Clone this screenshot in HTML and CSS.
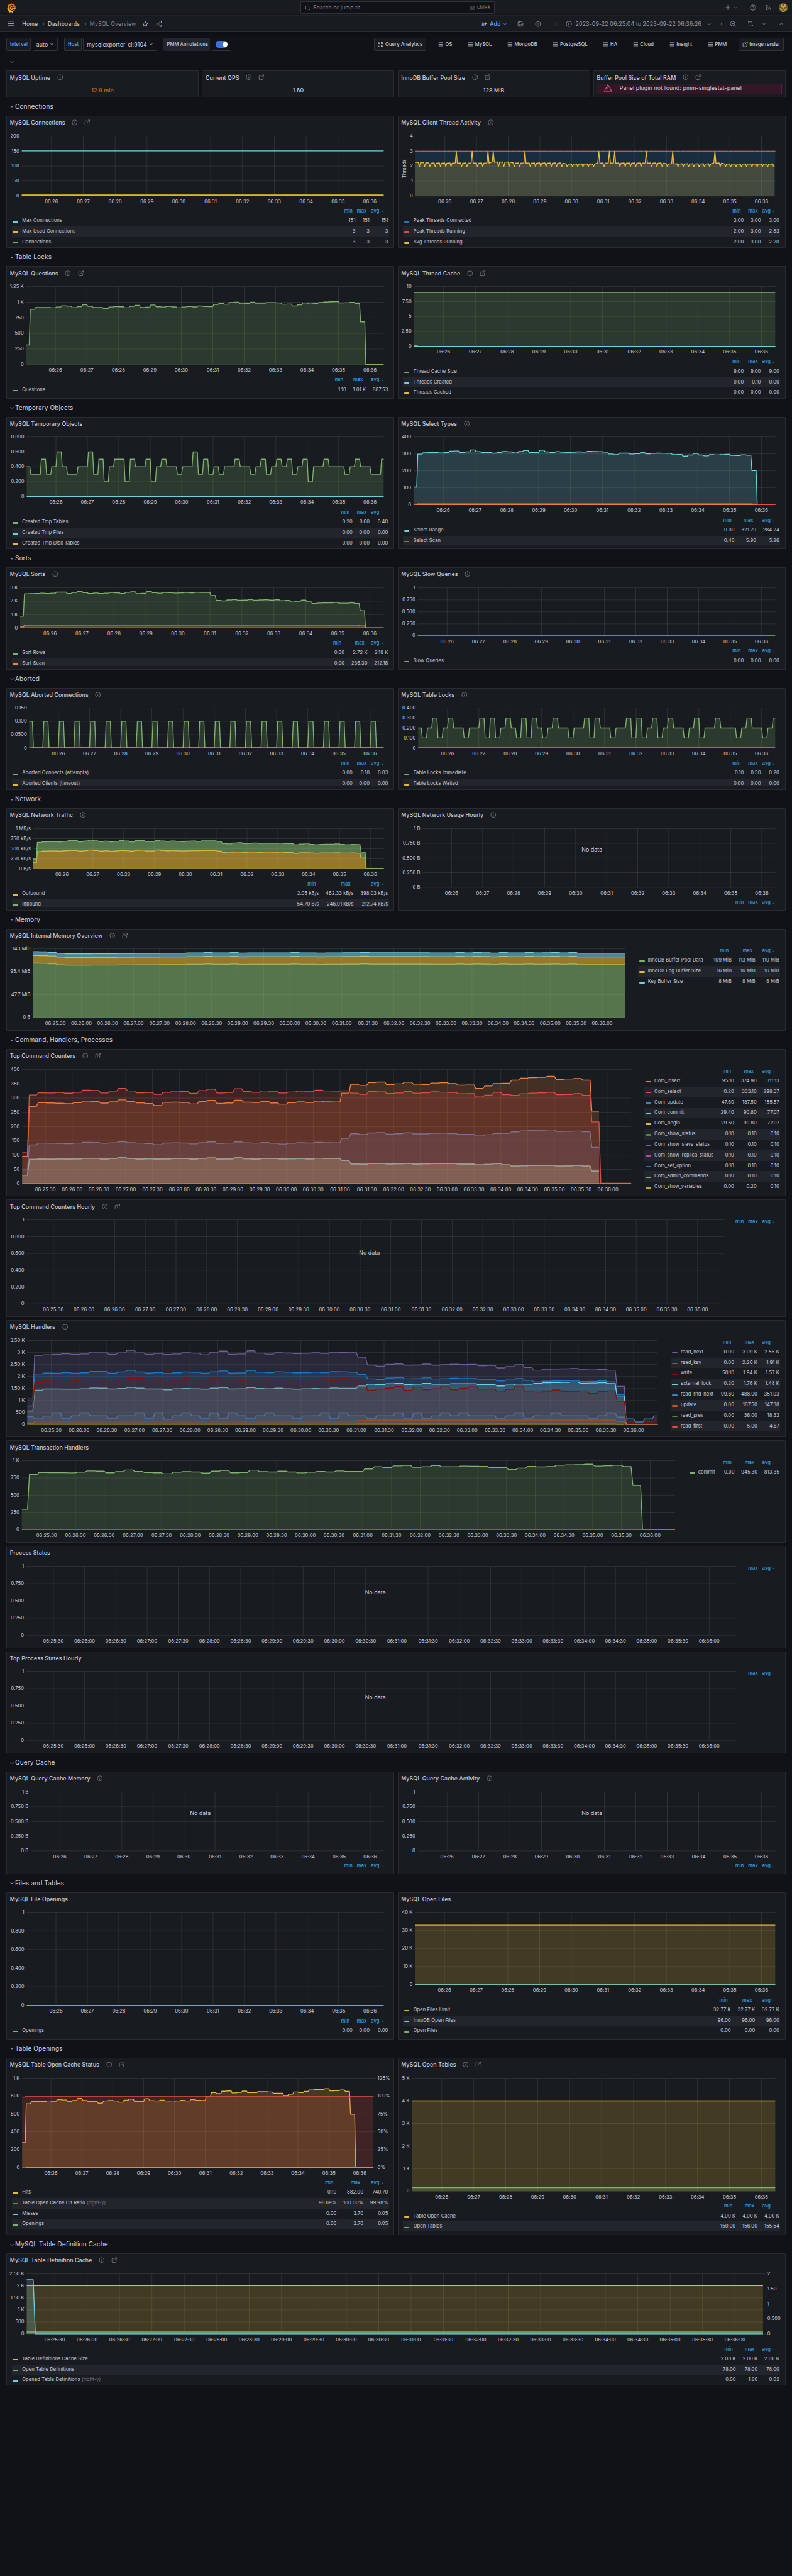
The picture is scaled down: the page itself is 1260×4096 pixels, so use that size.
FILE: index.html
```html
<!DOCTYPE html>
<html lang="en">
<head>
<meta charset="utf-8">
<title>MySQL Overview - Dashboards - Grafana</title>
<link rel="stylesheet" href="styles.css">
</head>
<body>
<svg class="sprite" aria-hidden="true">
  <defs>
    <linearGradient id="flame" x1="0" y1="1" x2="0" y2="0"><stop offset="0" stop-color="#fcd51f"/><stop offset=".4" stop-color="#faa51a"/><stop offset="1" stop-color="#f05a28"/></linearGradient>
  </defs>
  <symbol id="i-down" viewBox="0 0 24 24"><path d="M6.5 9.5l5.5 5.5 5.5-5.5"/></symbol>
  <symbol id="i-up" viewBox="0 0 24 24"><path d="M5 15.5l7-7 7 7"/></symbol>
  <symbol id="i-right" viewBox="0 0 24 24"><path d="M9.5 6.5l5.5 5.5-5.5 5.5"/></symbol>
  <symbol id="i-left" viewBox="0 0 24 24"><path d="M14.5 6.5L9 12l5.5 5.5"/></symbol>
  <symbol id="i-info" viewBox="0 0 24 24"><circle cx="12" cy="12" r="10"/><path d="M12 11v6M12 7v1.6"/></symbol>
  <symbol id="i-link" viewBox="0 0 24 24"><path d="M13 5.5H5.5A2.5 2.5 0 0 0 3 8v11.5A2.5 2.5 0 0 0 5.5 22H17a2.5 2.5 0 0 0 2.5-2.5V11M15.5 2.5H22V9M21.5 3L10 14.5"/></symbol>
  <symbol id="i-bars" viewBox="0 0 24 24"><path d="M2 5h20M2 12h20M2 19h20"/></symbol>
  <symbol id="i-star" viewBox="0 0 24 24"><path d="M12 2.5l2.9 6 6.6.9-4.8 4.6 1.2 6.6L12 17.5l-5.9 3.1 1.2-6.6L2.5 9.4l6.600-.9z"/></symbol>
  <symbol id="i-share" viewBox="0 0 24 24"><circle cx="18" cy="5" r="3.2"/><circle cx="6" cy="12" r="3.2"/><circle cx="18" cy="19" r="3.2"/><path d="M8.8 10.4l6.4-3.8M8.8 13.6l6.4 3.8"/></symbol>
  <symbol id="i-search" viewBox="0 0 24 24"><circle cx="11" cy="11" r="8"/><path d="M17 17l5 5"/></symbol>
  <symbol id="i-keys" viewBox="0 0 24 24"><rect x="2" y="5" width="20" height="14" rx="2"/><path d="M5 9h2M9 9h2M13 9h2M17 9h2M5 12.5h2M9 12.5h2M13 12.5h2M17 12.5h2M7 16h10"/></symbol>
  <symbol id="i-plus" viewBox="0 0 24 24"><path d="M12 3v18M3 12h18"/></symbol>
  <symbol id="i-help" viewBox="0 0 24 24"><circle cx="12" cy="12" r="9.8"/><path d="M9.3 9.5a2.7 2.7 0 1 1 3.9 2.3c-.8.4-1.2.9-1.2 1.9M12 16v1.5"/></symbol>
  <symbol id="i-rss" viewBox="0 0 24 24"><path d="M4 3.500A16.500 16.500 0 0 1 20.500 20M4 9a11 11 0 0 1 11 11M4 14a6 6 0 0 1 6 6"/><circle cx="5" cy="19" r="1.800"/></symbol>
  <symbol id="i-save" viewBox="0 0 24 24"><path d="M3 6a3 3 0 0 1 3-3h9.500L21 8.500V18a3 3 0 0 1-3 3H6a3 3 0 0 1-3-3zM8 3v5h6M7.500 21v-7h9v7"/></symbol>
  <symbol id="i-gear" viewBox="0 0 24 24"><circle cx="12" cy="12" r="3.500"/><path d="M10 2.500h4l.6 2.800 2.400-1.500 2.900 2.900-1.500 2.300 3.100.8v4.400l-3.100.8 1.500 2.300-2.900 2.900-2.400-1.500-.6 2.800h-4l-.6-2.800L7 20.200l-2.900-2.900L5.600 15l-3.100-.8V9.800L5.600 9 4.100 6.700 7 3.800l2.400 1.500z"/></symbol>
  <symbol id="i-clock" viewBox="0 0 24 24"><circle cx="12" cy="12" r="9.800"/><path d="M12 6v6.500H8"/></symbol>
  <symbol id="i-zoomout" viewBox="0 0 24 24"><circle cx="11" cy="11" r="8.500"/><path d="M7.500 11h7M17.500 17.500L22 22"/></symbol>
  <symbol id="i-sync" viewBox="0 0 24 24"><path d="M20.500 9.500A9 9 0 0 0 4.500 7.500M4 2.500v5.500h5.500M3.500 14.500a9 9 0 0 0 16 2M20 21.500V16h-5.500"/></symbol>
  <symbol id="i-apps" viewBox="0 0 24 24"><rect x="2.500" y="2.500" width="7" height="7"/><rect x="14.500" y="2.500" width="7" height="7"/><rect x="2.500" y="14.500" width="7" height="7"/><rect x="14.500" y="14.500" width="7" height="7"/></symbol>
  <symbol id="i-warn" viewBox="0 0 24 24"><path d="M12 3L22 20.500H2zM12 9.500v5M12 16.500v1.500"/></symbol>
  <symbol id="i-add" viewBox="0 0 24 24"><path d="M2.500 21V11M7.500 21V6M12.500 21V10M17 21v-5" stroke-width="3"/><path d="M18.500 6v9M14 10.500h9" stroke="#ff9830" stroke-width="2.600"/></symbol>
</svg>

<header class="topbar">
  <svg class="logo" viewBox="0 0 24 26"><path fill="url(#flame)" d="M12.500 0l2.800 2.800 5-.6.500 4.300 2.600 3-1 2.500L23.500 15l-2.800 2.700-.2 4.500-3.800.2L15 25.800l-3.400-1.500L6 25.500l-.8-4L2.500 19l-.5-3L0 14l2.500-3L2.800 4.500l4.400-.3L9 2l2 .5z"/><path d="M20.500 11.500C19 6.500 13 4.800 9.500 7.300 6 9.800 5.500 15 8.500 18c3 3 9 2.500 10.500-2 .8-3-1.500-5.800-4.500-5.500-3.500.3-4.300 4.700-1.300 5.700 1.700.4 2.800-1 2.300-2.200" fill="none" stroke="#181b1f" stroke-width="1.800"/></svg>
  <div class="search"><svg class="ic"><use href="#i-search"/></svg><span>Search or jump to...</span><span class="kbd"><svg class="ic"><use href="#i-keys"/></svg>ctrl+k</span></div>
  <div class="top-actions">
    <svg class="ic"><use href="#i-plus"/></svg><svg class="ic chev"><use href="#i-down"/></svg><i class="rule"></i>
    <svg class="ic help"><use href="#i-help"/></svg><svg class="ic rss"><use href="#i-rss"/></svg>
    <svg class="avatar" viewBox="0 0 24 24"><circle cx="12" cy="12" r="12" fill="#4c6a0c"/><path fill="#f08a78" d="M6 3h3v4h6V3h3v7h-3v2H9v-2H6zM3 12h3v4h3v3H6v-2H3zM18 12h3v5h-3v2h-3v-3h3zM10.500 14h3v3h-3zM9 20h6v3H9z"/></svg>
  </div>
</header>

<nav class="navbar">
  <svg class="ic menu"><use href="#i-bars"/></svg>
  <div class="crumbs"><span>Home</span><svg class="ic"><use href="#i-right"/></svg><span>Dashboards</span><svg class="ic"><use href="#i-right"/></svg><span class="current">MySQL Overview</span></div>
  <svg class="ic star"><use href="#i-star"/></svg><svg class="ic share"><use href="#i-share"/></svg>
  <div class="tools">
    <span class="add"><svg class="ic"><use href="#i-add"/></svg>Add<svg class="ic chev"><use href="#i-down"/></svg></span>
    <svg class="ic save"><use href="#i-save"/></svg><svg class="ic gear"><use href="#i-gear"/></svg>
    <svg class="ic prev"><use href="#i-left"/></svg>
    <span class="range"><svg class="ic"><use href="#i-clock"/></svg>2023-09-22 06:25:04 to 2023-09-22 06:36:26<svg class="ic chev"><use href="#i-down"/></svg></span>
    <svg class="ic next"><use href="#i-right"/></svg><svg class="ic zoomout"><use href="#i-zoomout"/></svg>
    <svg class="ic sync"><use href="#i-sync"/></svg><svg class="ic more"><use href="#i-down"/></svg><i class="rule"></i><svg class="ic fold"><use href="#i-up"/></svg>
  </div>
</nav>

<div class="submenu">
  <span class="box key">Interval</span><span class="box val">auto<svg class="ic"><use href="#i-down"/></svg></span>
  <span class="box key host">Host</span><span class="box val wide">mysqlexporter-cl:9104<svg class="ic"><use href="#i-down"/></svg></span>
  <span class="box tag">PMM Annotations</span><span class="box switch"><i></i></span>
  <div class="links">
    <span class="link boxed"><svg class="ic"><use href="#i-apps"/></svg>Query Analytics</span>
    <span class="link"><svg class="ic"><use href="#i-bars"/></svg>OS</span>
    <span class="link"><svg class="ic"><use href="#i-bars"/></svg>MySQL</span>
    <span class="link"><svg class="ic"><use href="#i-bars"/></svg>MongoDB</span>
    <span class="link"><svg class="ic"><use href="#i-bars"/></svg>PostgreSQL</span>
    <span class="link"><svg class="ic"><use href="#i-bars"/></svg>HA</span>
    <span class="link"><svg class="ic"><use href="#i-bars"/></svg>Cloud</span>
    <span class="link"><svg class="ic"><use href="#i-bars"/></svg>Insight</span>
    <span class="link"><svg class="ic"><use href="#i-bars"/></svg>PMM</span>
    <span class="link boxed last"><svg class="ic"><use href="#i-link"/></svg>Image render</span>
  </div>
</div>

<main class="dashboard" id="dashboard"></main>
<script src="dashboard.js"></script>
</body>
</html>
```
FILE: styles.css
```css
/* 1rem equals ten layout units */
html { font-size: 6.3px; background: #111217; }
* { box-sizing: border-box; }
body {
  margin: 0;
  height: 4096px;
  overflow: hidden;
  background: #111217;
  color: #ccccdc;
  font: 400 1.4rem/1.5 Inter, "Liberation Sans", sans-serif;
  letter-spacing: .01071em;
}
.sprite { position: absolute; width: 0; height: 0; }
.ic { width: 1.6rem; height: 1.6rem; flex: none; fill: none; stroke: currentColor; stroke-width: 2; overflow: visible; }
.rule { width: 1px; height: 2.4rem; background: #34363c; }

.topbar, .navbar { display: flex; align-items: center; background: #181b1f; padding: 0 1.1rem 0 1.7rem; }
.topbar { height: 4rem; border-bottom: 1px solid #2a2c32; }
.logo { width: 2.3rem; height: 2.4rem; }
.search {
  display: flex; align-items: center; gap: .7rem;
  width: 49rem; height: 3.2rem; margin-left: 71.9rem; padding: 0 .9rem;
  background: #111217; border: 1px solid #303238; border-radius: .2rem; color: #85868f;
}
.search .ic { width: 1.4rem; height: 1.4rem; }
.kbd { margin-left: auto; display: flex; align-items: center; gap: .5rem; font-size: 1.2rem; }
.top-actions { display: flex; align-items: center; margin-left: auto; color: #9a9aa6; }
.top-actions .chev { width: 1.4rem; margin: 0 1.4rem 0 .4rem; }
.top-actions .help { margin: 0 2.2rem 0 1.4rem; }
.top-actions .rss { margin-right: 1.8rem; }
.avatar { width: 2.3rem; height: 2.3rem; }

.navbar { height: 4.1rem; border-bottom: 1px solid #2a2c32; box-shadow: 0 .2rem .8rem #0a0b0e; }
.navbar .menu { width: 2.1rem; height: 2rem; }
.crumbs { display: flex; align-items: center; margin-left: 1.8rem; }
.crumbs .ic { width: 1.4rem; margin: 0 .5rem 0 .6rem; }
.crumbs .current { color: #85868f; }
.navbar .star { margin-left: 1.6rem; }
.navbar .share { margin-left: 1.8rem; }
.tools { display: flex; align-items: center; margin-left: auto; color: #9798a3; }
.add { display: flex; align-items: center; color: #6e9fff; font-weight: 500; }
.add .ic { width: 1.8rem; margin-right: .6rem; }
.add .chev, .range .chev { width: 1.4rem; margin: 0 0 0 .4rem; }
.tools .save { margin-left: 2.4rem; }
.tools .gear { margin-left: 2.8rem; }
.tools .prev { margin-left: 3.1rem; }
.range { display: flex; align-items: center; margin-left: 1.5rem; }
.range .ic { margin-right: .9rem; }
.range .chev { margin: 0 0 0 1.2rem; }
.tools .next { margin-left: 1.5rem; }
.tools .zoomout { margin-left: 1.5rem; }
.tools .sync { margin-left: 2.8rem; }
.tools .more { width: 1.4rem; margin: 0 1.4rem 0 1.9rem; }
.tools .fold { margin: 0 .8rem 0 1.3rem; }

.submenu { display: flex; align-items: center; height: 5.9rem; padding: 0 2rem 0 1.6rem; padding-top: .3rem; }
.box {
  display: flex; align-items: center; height: 3.2rem; padding: 0 .8rem;
  border: 1px solid #303238; border-radius: .2rem; white-space: nowrap;
}
.key { width: 6.2rem; background: #181b1f; color: #6e9fff; font-size: 1.2rem; font-weight: 500; }
.host { width: 4.4rem; margin-left: 1.6rem; }
.val { width: 6.4rem; margin-left: .4rem; background: #111217; }
.val .ic { width: 1.4rem; margin-left: .2rem; }
.wide { width: 18.7rem; }
.wide .ic { margin-left: .4rem; }
.tag { width: 11.8rem; margin-left: 1.6rem; background: #22252b; border-color: #22252b; font-size: 1.2rem; font-weight: 500; padding: 0 .7rem; }
.switch { width: 5rem; margin-left: .4rem; }
.switch i { width: 3.2rem; height: 1.6rem; border-radius: .8rem; background: radial-gradient(circle at 2.4rem 50%, #fff .6rem, #3d71d9 .65rem); }
.links { display: flex; align-items: center; margin-left: auto; font-size: 1.2rem; font-weight: 500; }
.link { display: flex; align-items: center; gap: .45rem; margin-left: 3.9rem; white-space: nowrap; }
.link .ic { width: 1.4rem; height: 1.4rem; }
.boxed { height: 3.2rem; padding: 0 .8rem; background: #181b1f; border: 1px solid #303238; border-radius: .2rem; }
.boxed + .link { margin-left: 3rem; }
.last { margin-left: 2.9rem; }

/* 24 columns, 30-unit rows, 8-unit gutters */
.dashboard {
  display: grid; grid-template-columns: repeat(24, 1fr); grid-auto-rows: 18.892px; gap: 5.048px;
  margin: 0 1.6rem;
}
.section { grid-column: 1 / -1; display: flex; align-items: center; margin: 0; padding-left: .6rem; font-size: 1.6rem; font-weight: 400; }
.section .ic { stroke-width: 2.2; }
.panel {
  display: flex; flex-direction: column; min-width: 0; min-height: 0; overflow: hidden;
  background: #181b1f; box-shadow: inset 0 0 0 1px #282b30; border-radius: .2rem; padding-bottom: .9rem;
}
.w6 { grid-column: span 6; }
.w12 { grid-column: span 12; }
.w24 { grid-column: span 24; }
.h2 { grid-row: span 2; }
.h7 { grid-row: span 7; }
.h8 { grid-row: span 8; }
.h9 { grid-row: span 9; }
.h10 { grid-row: span 10; }
.h12 { grid-row: span 12; }
.head { flex: none; height: 3.3rem; padding: .2rem .9rem 0; display: flex; align-items: center; font-weight: 500; }
.head .ic { width: 1.5rem; height: 1.5rem; margin-left: 1.7rem; color: #85868f; stroke-width: 2; }
.panel-body { flex: 1; min-height: 0; display: flex; flex-direction: column; }
.beside { flex-direction: row; align-items: flex-start; }
.chart { display: block; flex: none; }
.stat { align-self: center; margin-top: .6rem; font-weight: 500; }
.warm { color: #c66b21; }
.alert {
  display: flex; gap: 1.7rem; height: 3.4rem; margin: 0 .9rem; padding: 0 1.6rem;
  background: #331727; border: solid #5b1f3d; border-width: 0 1px;
}
.alert .ic { width: 2.3rem; height: 2.2rem; color: #ff5286; }

.grid { stroke: #c8d2be; stroke-opacity: .2; stroke-width: 1; }
.axis { fill: #ccccdc; font: 400 12px Inter, sans-serif; letter-spacing: .1px; }
.nodata { fill: #ccccdc; font: 400 14px Inter, sans-serif; text-anchor: middle; }
.line { fill: none; stroke-width: 2.2; stroke-linejoin: round; }

.legend {
  display: grid; flex: 0 1 auto; min-height: 0; overflow: hidden;
  margin: .1rem 1.4rem 0; font-size: 1.2rem; line-height: 2.675rem; white-space: nowrap; align-content: start;
}
.cols3 { grid-template-columns: 1fr auto auto auto; }
.cols2 { grid-template-columns: 1fr auto auto; }
.beside .legend { flex: 1; margin-left: 0; margin-top: 1.4rem; }
.legend-row { display: grid; grid-column: 1 / -1; grid-template-columns: subgrid; height: 2.675rem; }
.legend-row:nth-child(odd) { background: #22252b; }
.legend .legend-head { height: 2.1rem; line-height: 2rem; color: #33a2e5; font-weight: 500; background: none; }
.legend-row b { font-weight: 400; text-align: right; padding-left: 1.7rem; padding-right: 0; }
.legend-row b:last-child { padding-right: .2rem; }
.legend-head b { font-weight: 500; padding: 0 .75rem 0 .35rem; }
.legend-head b:last-child { padding-right: 1.1rem; }
.legend-head .ic { width: 1.1rem; height: 1.1rem; margin-left: .2rem; vertical-align: -.2rem; stroke-width: 3; }
.name { display: flex; align-items: center; }
.swatch { width: 1.4rem; height: .4rem; border-radius: .2rem; margin: .3rem 1rem 0 .2rem; }
.beside .swatch { margin-right: .8rem; margin-left: .3rem; }
.name em { font-style: normal; color: #77787f; margin-left: .4rem; }
```
FILE: dashboard.js
```javascript
const C = {
  green: '#7EB26D', yellow: '#EAB839', cyan: '#6ED0E0', orange: '#EF843C', red: '#E24D42', blue: '#1F78C1',
  steel: '#447EBC', violet: '#705DA0', leaf: '#508642', magenta: '#BA43A9', gold: '#CCA300', maroon: '#890F02', rust: '#C15C17'
};
const SPAN = 682;          // seconds between 06:25:04 and 06:36:26
const TOP = 51.5;          // plot top inside a panel
const icon = id => `<svg class="ic"><use href="#i-${id}"/></svg>`;

// "12 15*3" -> [12, 15, 15, 15]
const unpack = s => s.trim().split(/\s+/).flatMap(p => {
  const [v, n] = p.split('*');
  return Array(+(n || 1)).fill(+v);
});

// One value per ten-second bucket, joined by two-second ramps.
function stairs(values) {
  const pts = [];
  values.forEach((v, i) => {
    const from = i ? 7 + 10 * (i - 1) + 1 : 0;
    pts.push([from, v], [Math.max(from, Math.min(7 + 10 * i - 1, SPAN)), v]);
  });
  if (values.length === 69) pts[pts.length - 1][0] = SPAN;
  return pts;
}

function chart(c) {
  const { left, right, bottom } = c;
  const width = c.width || 980;
  const end = c.side ? bottom + 26 : bottom + 28.5;
  const x = t => +(left + t / SPAN * (right - left)).toFixed(1);
  const y = v => +(bottom + (v - c.scale[0]) / (c.scale[1] - c.scale[0]) * (TOP - bottom)).toFixed(1);
  const out = [];

  (c.series || []).forEach(s => {
    const data = s.points || stairs(unpack(s.data));
    const pts = data.map(([t, v]) => [x(t), y(v)]);
    const path = pts.map(p => p.join(' ')).join('L');
    if (s.fill) {
      const floor = s.above
        ? stairs(unpack(s.above)).map(([t, v]) => [x(t), y(v)]).reverse().map(p => p.join(' ')).join('L')
        : `${pts[pts.length - 1][0]} ${bottom}L${pts[0][0]} ${bottom}`;
      out.push(`<path d="M${path}L${floor}Z" fill="${s.color}" fill-opacity="${s.fill}"/>`);
    }
    out.push(`<path class="line" d="M${path}" stroke="${s.color}"${s.dash ? ` stroke-dasharray="${s.dash}"` : ''}/>`);
  });

  const grid = [], n = c.y.length - 1;
  c.y.forEach((label, i) => {
    const gy = +(bottom + i / n * (TOP - bottom)).toFixed(1);
    grid.push(`M${left} ${gy}H${right}`);
    out.push(`<text class="axis" x="${left - 6}" y="${gy + 3.6}" text-anchor="end">${label}</text>`);
  });
  (c.y2 || []).forEach((label, i) => {
    const gy = +(bottom + i / (c.y2.length - 1) * (TOP - bottom)).toFixed(1);
    grid.push(`M${right} ${gy}h6`);
    out.push(`<text class="axis" x="${right + 11}" y="${gy + 3.6}">${label}</text>`);
  });
  const step = width > 980 ? 30 : 60;
  for (let t = step === 30 ? 26 : 56; t < SPAN; t += step) {
    const clock = 25 * 60 + 4 + t;
    const mm = String(Math.floor(clock / 60)).padStart(2, '0');
    const ss = String(clock % 60).padStart(2, '0');
    grid.push(`M${x(t)} ${TOP}V${bottom}`);
    out.push(`<text class="axis" x="${x(t)}" y="${bottom + 18.5}" text-anchor="middle">06:${mm}${step === 30 ? ':' + ss : ''}</text>`);
  }
  if (c.unit) out.push(`<text class="axis" transform="translate(21 ${(TOP + bottom) / 2 + 6}) rotate(-90)" text-anchor="middle">${c.unit}</text>`);
  if (c.empty) out.push(`<text class="nodata" x="${c.empty[0]}" y="${c.empty[1] + 5}">No data</text>`);

  const w = c.side || width;
  return `<svg class="chart" style="width:${w / 10}rem;height:${(end - 33) / 10}rem" viewBox="0 33 ${w} ${end - 33}">` +
    `<path class="grid" fill="none" d="${grid.join('')}"/>${out.join('')}</svg>`;
}

function legend(cols, rows) {
  const head = cols.map((h, i) => `<b>${h}${i === cols.length - 1 ? icon('down') : ''}</b>`).join('');
  return `<div class="legend cols${cols.length}"><div class="legend-row legend-head"><span></span>${head}</div>` +
    rows.map(([color, name, vals, note]) =>
      `<div class="legend-row"><span class="name"><i class="swatch" style="background:${C[color]}"></i>${name}` +
      `${note ? `<em>${note}</em>` : ''}</span>${vals.split('|').map(v => `<b>${v}</b>`).join('')}</div>`).join('') + '</div>';
}

const section = title => `<h2 class="section">${icon('down')}${title}</h2>`;
const panel = (size, title, icons, body, beside) =>
  `<section class="panel ${size}"><div class="head">${title}${icons.map(icon).join('')}</div>` +
  `<div class="panel-body${beside ? ' beside' : ''}">${body}</div></section>`;
const graph = (size, title, icons, c, rows, cols = ['min', 'max', 'avg']) =>
  panel(size, title, icons, chart(c) + legend(cols, rows), c.side);

const flat = (v, color, fill) => ({ points: [[0, v], [SPAN, v]], color: C[color], fill });

// ---- series -------------------------------------------------------------
const questions = '603 368 356*3 358 353 345 347 357 350 338 348 356 356 364 353 350 351 358 348 341 356 354 339 351 353 348 352 358 353 349 352 346 349 350 336 329 334 323 321 331 329 321 328 328 324 324 326 334 333 346 338 326 332 330 323 320 318 317 326 325 322 330 451 733*4';
const tmpTables = ['4', '3353464334463524', '5525', '445245', '44344', '635343', '44544', '345345453452', '445444', '345', '44335'].join('');
const selects = '1542 1325 1316 1315 1315 1317 1313 1305 1304 1315 1310 1297 1309 1314 1313 1318 1314 1308 1310 1317 1307 1301 1315 1314 1299 1310 1314 1309 1312 1315 1312 1310 1311 1306 1308 1309 1311 1324 1328 1318 1318 1324 1322 1315 1323 1320 1318 1319 1320 1328 1327 1338 1331 1321 1331 1336 1328 1330 1328 1326 1333 1334 1329 1332 1433 1655*4';
const sortRows = '822 675 674 673 671 673 671 664 664 673 667 659 668 673 670 673 671 667 669 673 666 662 674 672 660 668 671 667 668 670 669 667 669 666 667 667 687 719 722 716 714 718 717 714 718 716 715 717 715 721 719 729 724 717 728 739 736 735 735 733 737 737 735 739 787 899*4';
const outbound = '879 807 804 803 803 804 802 800 800 804 801 797 800 804 802 805 803 800 801 804 799 798 803 803 797 800 802 801 802 803 802 801 801 800 800 800 804 814 815 811 810 813 811 811 813 811 811 812 811 813 814 819 815 811 816 818 816 816 816 815 817 817 816 818 849 919*4';
const traffic = '857 747 743 742 742 743 740 736 736 743 738 732 737 742 739 743 740 736 738 743 736 734 741 741 734 738 740 738 740 742 739 738 740 737 737 737 741 755 757 751 749 755 754 751 754 753 753 753 752 755 756 763 758 752 760 763 760 759 759 757 761 763 761 762 811 918*4';
const pool = unpack('1546 1547 1550 1557 1560*3 1559*3 1558*2 1557*3 1556*3 1554*2 1552 1554*2 1552 1555 1554*5 1552 1554*2 1555 1554*2 1553*2 1551 1553*5 1553*2 1554*3 1552 1554 1552 1553 1555 1552 1554 1554 1552 1554 1553 1552 1554 1552 1556*20').slice(0, 69);
const lift = d => pool.map(v => v - d).join(' ');
const commit = '1374 1270 1268 1269 1267 1268 1267 1263 1263 1268 1264 1257 1264 1268 1266 1268 1267 1264 1265 1268 1263 1260 1268 1267 1259 1266 1268 1264 1264 1267 1266 1265 1267 1262 1264 1264 1278 1300 1302 1298 1297 1300 1299 1297 1301 1299 1298 1298 1298 1301 1301 1306 1303 1298 1306 1314 1312 1311 1310 1310 1314 1313 1311 1314 1348';
const update = '1339 1175 1163 1164 1165 1167 1163 1158 1159 1164 1161 1154 1160 1163 1166 1173 1162 1161 1162 1168 1160 1155 1165 1163 1155 1161 1163 1159 1164 1169 1164 1160 1162 1158 1160 1161 1131 1101 1106 1096 1094 1104 1101 1095 1102 1102 1098 1097 1100 1105 1105 1115 1108 1099 1098 1089 1082 1080 1078 1076 1086 1085 1083 1088 1191';
const insert = '1250 921 896 898 900 903 896 886 888 899 891 878 890 897 902 916 894 893 895 905 888 881 901 898 880 893 895 888 898 906 896 891 895 886 891 892 833 775 782 763 760 776 772 761 774 776 767 765 770 781 780 802 787 770 768 748 735 731 729 723 743 740 737 748 952';
const select = '1221 846 831 832 829 834 828 814 816 832 820 802 819 831 829 841 828 820 823 835 817 807 832 829 804 823 828 819 824 832 826 820 824 814 819 820 818 833 841 823 820 836 832 822 833 831 824 827 829 838 837 859 847 828 843 848 838 833 831 828 843 842 837 848 1023 1427*4';
const readNext = '1282 994 990 987 984 987 985 972 972 987 978 961 978 987 982 988 985 977 980 990 973 966 987 985 964 980 986 977 979 983 981 977 982 973 976 977 1007 1058 1066 1054 1051 1060 1058 1052 1059 1056 1053 1055 1054 1063 1061 1077 1068 1056 1074 1092 1085 1084 1083 1081 1089 1090 1086 1092 1199 1450*4';
const readKey = '1328 1117 1111 1112 1108 1112 1109 1101 1101 1112 1104 1093 1104 1111 1108 1114 1109 1104 1106 1112 1103 1097 1111 1110 1094 1105 1108 1103 1105 1109 1108 1105 1108 1102 1103 1105 1120 1149 1154 1144 1142 1149 1148 1143 1150 1148 1145 1147 1147 1152 1152 1163 1157 1147 1159 1169 1165 1163 1162 1160 1167 1166 1163 1169 1253 1450*4';
const write = '1338 1174 1161 1152 1168 1160 1149 1152 1152 1170 1154 1144 1144 1171 1148 1171 1159 1144 1156 1170 1142 1158 1151 1160 1157 1156 1149 1155 1155 1167 1157 1155 1148 1162 1143 1156 1178 1224 1216 1211 1200 1225 1204 1220 1215 1202 1221 1212 1202 1217 1216 1235 1219 1202 1235 1237 1234 1222 1232 1231 1236 1246 1233 1228 1296 1433 1441 1433 1422';
const extLock = '1361 1224 1216 1216 1217 1217 1215 1210 1211 1216 1213 1206 1211 1216 1216 1221 1215 1213 1215 1217 1211 1207 1216 1215 1207 1213 1215 1211 1215 1217 1215 1213 1215 1210 1212 1212 1197 1184 1188 1182 1179 1186 1184 1179 1184 1184 1182 1182 1182 1188 1187 1196 1190 1183 1184 1180 1175 1174 1173 1170 1178 1177 1175 1181 1262 1450*4';
const rndNext = '1399 1414 1395 1374 1413 1393 1374 1393 1393 1413 1393 1393 1374 1413 1374 1416 1393 1374 1393 1413 1374 1413 1374 1393 1413 1393 1374 1393 1393 1413 1394 1393 1374 1413 1374 1393 1393 1413 1393 1393 1374 1413 1374 1413 1394 1374 1393 1374 1393 1393 1393 1413 1393 1374 1413 1393 1394 1374 1393 1393 1393 1413 1393 1374 1402 1414 1434 1414 1394';
const commits = '444 214 201 202 202 204 199 191 193 203 196 185 195 201 203 210 199 196 198 205 193 188 203 201 186 196 198 193 198 204 199 195 198 191 195 195 178 164 169 158 155 167 164 156 164 164 159 160 161 169 168 182 173 161 165 162 154 151 150 147 159 157 154 162 287 577*4';
const hits = '1483 1227 1211 1211 1211 1215 1210 1200 1202 1212 1205 1192 1205 1211 1212 1223 1208 1205 1208 1216 1203 1196 1212 1211 1194 1206 1208 1203 1208 1215 1208 1204 1208 1200 1204 1205 1175 1153 1160 1144 1142 1155 1152 1143 1153 1153 1147 1147 1149 1158 1157 1172 1163 1149 1153 1145 1136 1133 1132 1128 1141 1140 1136 1145 1296 1646*4';

const aborted = '1 ' + Array.from({ length: 68 }, (_, k) => (k % 3 === 2 && k < 67 ? 1 : 0)).join(' ');
const highs = [2, 5, 11, 13, 16, 19, 21, 25, 31, 33, 39, 41, 44, 47, 52, 56, 62, 67];
const lows = [0, 3, 8, 12, 14, 18, 20, 23, 28, 32, 36, 40, 42, 45, 50, 53, 60, 65];
const locks = '2 ' + Array.from({ length: 68 }, (_, k) => (highs.includes(k) ? 3 : lows.includes(k) ? 1 : 2)).join(' ');

// Threads running hovers near 2.2, touching 2 or 3 once per bucket.
const spikes = [7, 10, 13, 14, 20, 34, 36, 37, 43, 48, 56];
const running = [[0, 2.27]];
for (let k = 0; k < 68; k++) {
  const t = 7.7 + k * 10;
  const level = k < 2 ? 2.25 : k > 13 && k < 18 ? 2.29 : k > 27 && k < 34 ? 2.16 : k > 46 && k < 56 ? 2.17 : k > 57 ? 2.16 : 2.22;
  running.push([t - 2, level], [t, spikes.includes(k) ? 3 : 1.97], [Math.min(t + 2, SPAN), level - .02]);
}

const half = { right: 953, width: 980 };
const wide = { width: 1968 };
const NO = [];
const html = [
  section(''),
  panel('w6 h2', 'MySQL Uptime', ['info'], '<span class="stat warm">12.9 min</span>'),
  panel('w6 h2', 'Current QPS', ['info', 'link'], '<span class="stat">1.60</span>'),
  panel('w6 h2', 'InnoDB Buffer Pool Size', ['info', 'link'], '<span class="stat">128 MiB</span>'),
  panel('w6 h2', 'Buffer Pool Size of Total RAM', ['info', 'link'], `<div class="alert">${icon('warn')}<span>Panel plugin not found: pmm-singlestat-panel</span></div>`),

  section('Connections'),
  graph('w12 h9', 'MySQL Connections', ['info', 'link'], { ...half, left: 39, bottom: 202, scale: [0, 200], y: ['0', '50', '100', '150', '200'],
    series: [flat(2, 'green'), flat(3, 'yellow'), flat(151, 'cyan')] },
    [['cyan', 'Max Connections', '151|151|151'], ['yellow', 'Max Used Connections', '3|3|3'], ['green', 'Connections', '3|3|3']]),
  graph('w12 h9', 'MySQL Client Thread Activity', ['info'], { ...half, left: 44, bottom: 202.5, scale: [0, 4], unit: 'Threads', y: ['0', '1', '2', '3', '4'],
    series: [flat(3, 'blue', .2), { ...flat(3, 'red'), dash: '12 1.4' }, { points: running, color: C.yellow, fill: .2 }] },
    [['blue', 'Peak Threads Connected', '3.00|3.00|3.00'], ['red', 'Peak Threads Running', '2.00|3.00|2.83'], ['yellow', 'Avg Threads Running', '2.00|3.00|2.20']]),

  section('Table Locks'),
  graph('w12 h9', 'MySQL Questions', ['info', 'link'], { ...half, left: 50, bottom: 248.5, scale: [733, 218], y: ['0', '250', '500', '750', '1 K', '1.25 K'],
    series: [{ data: questions, color: C.green, fill: .2 }] },
    [['green', 'Questions', '1.10|1.01 K|887.53']]),
  graph('w12 h9', 'MySQL Thread Cache', ['info', 'link'], { ...half, left: 40.5, bottom: 202.5, scale: [0, 10], y: ['0', '2.50', '5', '7.50', '10'],
    series: [flat(9, 'green', .2), flat(0, 'yellow'), { data: '.1 0*68', color: C.cyan }] },
    [['green', 'Thread Cache Size', '9.00|9.00|9.00'], ['cyan', 'Threads Created', '0.00|0.10|0.00'], ['yellow', 'Threads Cached', '0.00|0.00|0.00']]),

  section('Temporary Objects'),
  graph('w12 h9', 'MySQL Temporary Objects', NO, { ...half, left: 51.5, bottom: 202.5, scale: [0, 8], y: ['0', '0.200', '0.400', '0.600', '0.800'],
    series: [{ data: [...tmpTables].join(' '), color: C.green, fill: .2 }, flat(0, 'cyan')] },
    [['green', 'Created Tmp Tables', '0.20|0.60|0.40'], ['cyan', 'Created Tmp Files', '0.00|0.00|0.00'], ['yellow', 'Created Tmp Disk Tables', '0.00|0.00|0.00']]),
  graph('w12 h9', 'MySQL Select Types', ['info'], { ...half, left: 39.5, bottom: 223, scale: [1659, 1211], y: ['0', '100', '200', '300', '400'],
    series: [{ data: selects, color: C.cyan, fill: .2 }, flat(1657, 'orange'), { data: '1655 1652*63 1654 1657*4', color: C.red, fill: .2 }] },
    [['cyan', 'Select Range', '0.00|321.70|284.24'], ['red', 'Select Scan', '0.40|5.90|5.26']]),

  section('Sorts'),
  graph('w12 h7', 'MySQL Sorts', ['info'], { ...half, left: 35, bottom: 153, scale: [900, 636], y: ['0', '1 K', '2 K', '3 K'],
    series: [{ data: sortRows, color: C.green, fill: .2 }, flat(899, 'cyan'), { data: '893 880*63 886 899*4', color: C.orange, fill: .2 }] },
    [['green', 'Sort Rows', '0.00|2.72 K|2.18 K'], ['orange', 'Sort Scan', '0.00|236.30|212.16']]),
  graph('w12 h7', 'MySQL Slow Queries', ['info'], { ...half, left: 50, bottom: 172.5, scale: [0, 1], y: ['0', '0.250', '0.500', '0.750', '1'], series: [flat(0, 'green')] },
    [['green', 'Slow Queries', '0.00|0.00|0.00']]),

  section('Aborted'),
  graph('w12 h7', 'MySQL Aborted Connections', ['info'], { ...half, left: 58, bottom: 152.5, scale: [0, 1.5], y: ['0', '0.0500', '0.100', '0.150'],
    series: [{ data: aborted, color: C.green, fill: .2 }, flat(0, 'yellow')] },
    [['green', 'Aborted Connects (attempts)', '0.00|0.10|0.03'], ['yellow', 'Aborted Clients (timeout)', '0.00|0.00|0.00']]),
  graph('w12 h7', 'MySQL Table Locks', ['info'], { ...half, left: 51, bottom: 152.5, scale: [0, 4], y: ['0', '0.100', '0.200', '0.300', '0.400'],
    series: [{ data: locks, color: C.green, fill: .2 }, flat(0, 'yellow')] },
    [['green', 'Table Locks Immediate', '0.10|0.30|0.20'], ['yellow', 'Table Locks Waited', '0.00|0.00|0.00']]),

  section('Network'),
  graph('w12 h7', 'MySQL Network Traffic', ['info'], { ...half, left: 68, bottom: 152.5, scale: [920, 657], y: ['0 B/s', '250 kB/s', '500 kB/s', '750 kB/s', '1 MB/s'],
    series: [{ data: outbound, color: C.yellow, fill: .6 }, { data: traffic, above: outbound, color: C.green, fill: .6 }] },
    [['yellow', 'Outbound', '2.05 kB/s|462.33 kB/s|398.03 kB/s'], ['green', 'Inbound', '54.70 B/s|246.01 kB/s|212.74 kB/s']]),
  graph('w12 h7', 'MySQL Network Usage Hourly', ['info'], { ...half, left: 62.5, bottom: 199.5, scale: [0, 1], y: ['0 B', '0.250 B', '0.500 B', '0.750 B', '1 B'], empty: [490, 103.5] }, NO),

  section('Memory'),
  graph('w24 h7', 'MySQL Internal Memory Overview', ['info', 'link'], { ...wide, side: 1595, left: 67, right: 1562, bottom: 225, scale: [1905, 1451], y: ['0 B', '47.7 MiB', '95.4 MiB', '143 MiB'],
    series: [{ data: lift(0), color: C.green, fill: .6 }, { data: lift(51), above: lift(0), color: C.yellow, fill: .6 }, { data: lift(76), above: lift(51), color: C.cyan, fill: .6 }] },
    [['green', 'InnoDB Buffer Pool Data', '109 MiB|113 MiB|110 MiB'], ['yellow', 'InnoDB Log Buffer Size', '16 MiB|16 MiB|16 MiB'], ['cyan', 'Key Buffer Size', '8 MiB|8 MiB|8 MiB']]),

  section('Command, Handlers, Processes'),
  graph('w24 h10', 'Top Command Counters', ['info', 'link'], { ...wide, side: 1611.5, left: 40, right: 1578, bottom: 339.5, scale: [1430, 678], y: ['0', '50', '100', '150', '200', '250', '300', '350', '400'],
    series: [{ data: commit, color: C.yellow, fill: .2 }, { data: commit, color: C.cyan, fill: .2 }, { data: update, color: C.steel, fill: .2 },
      { data: insert, color: C.orange, fill: .2 }, { data: select, color: C.red, fill: .2 }, flat(1430, 'gold')] },
    [['orange', 'Com_insert', '95.10|374.90|311.13'], ['red', 'Com_select', '0.20|333.10|298.37'], ['steel', 'Com_update', '47.60|187.50|155.57'],
      ['cyan', 'Com_commit', '29.40|90.80|77.07'], ['yellow', 'Com_begin', '29.50|90.80|77.07'], ['leaf', 'Com_show_status', '0.10|0.10|0.10'],
      ['violet', 'Com_show_slave_status', '0.10|0.10|0.10'], ['magenta', 'Com_show_replica_status', '0.10|0.10|0.10'], ['blue', 'Com_set_option', '0.10|0.10|0.10'],
      ['green', 'Com_admin_commands', '0.10|0.10|0.10'], ['gold', 'Com_show_variables', '0.00|0.20|0.10']]),
  graph('w24 h8', 'Top Command Counters Hourly', ['info', 'link'], { ...wide, side: 1828, left: 51.5, right: 1813, bottom: 263.5, scale: [0, 1], y: ['0', '0.200', '0.400', '0.600', '0.800', '1'], empty: [917, 135] }, NO),
  graph('w24 h8', 'MySQL Handlers', ['info'], { ...wide, side: 1678, left: 53, right: 1645, bottom: 263, scale: [1450, 897], y: ['0', '500', '1 K', '1.50 K', '2 K', '2.50 K', '3 K', '3.50 K'],
    series: [{ data: readNext, color: C.violet, fill: .2 }, { data: readKey, color: C.blue, fill: .2 },
      { data: rndNext, color: C.steel, fill: .2 }, { data: extLock, color: C.cyan, fill: .2 },
      { data: '1443 1428*35 1425 1422*27 1430 1450*4', color: C.rust, fill: .2 }, { data: write, color: C.maroon, fill: .2 },
      { data: '1446 1448*35 1446*28 1450', color: C.leaf }, { data: '1450*65', color: C.gold }, { points: [[646, 1450], [682, 1450]], color: C.rust }] },
    [['violet', 'read_next', '0.00|3.09 K|2.55 K'], ['blue', 'read_key', '0.00|2.26 K|1.91 K'], ['maroon', 'write', '50.10|1.94 K|1.57 K'],
      ['cyan', 'external_lock', '0.20|1.76 K|1.48 K'], ['steel', 'read_rnd_next', '99.60|488.00|351.03'], ['rust', 'update', '0.00|187.50|147.38'],
      ['leaf', 'read_prev', '0.00|36.00|18.33'], ['red', 'read_first', '0.00|5.00|4.67']]),
  graph('w24 h7', 'MySQL Transaction Handlers', NO, { ...wide, side: 1722, left: 39, right: 1689, bottom: 225, scale: [577, 124], y: ['0', '250', '500', '750', '1 K'],
    series: [{ data: commits, color: C.green, fill: .2 }, flat(577, 'red')] }, [['green', 'commit', '0.00|945.30|813.35']]),
  graph('w24 h7', 'Process States', NO, { ...wide, side: 1858, left: 50.5, right: 1843.5, bottom: 225.5, scale: [0, 1], y: ['0', '0.250', '0.500', '0.750', '1'], empty: [932, 116.5] }, NO, ['max', 'avg']),
  graph('w24 h7', 'Top Process States Hourly', NO, { ...wide, side: 1858, left: 50.5, right: 1843.5, bottom: 225.5, scale: [0, 1], y: ['0', '0.250', '0.500', '0.750', '1'], empty: [932, 116.5] }, NO, ['max', 'avg']),

  section('Query Cache'),
  graph('w12 h7', 'MySQL Query Cache Memory', ['info'], { ...half, left: 62, bottom: 199.5, scale: [0, 1], y: ['0 B', '0.250 B', '0.500 B', '0.750 B', '1 B'], empty: [490, 103.5] }, NO),
  graph('w12 h7', 'MySQL Query Cache Activity', ['info'], { ...half, left: 50, bottom: 199.5, scale: [0, 1], y: ['0', '0.250', '0.500', '0.750', '1'], empty: [490, 103.5] }, NO),

  section('Files and Tables'),
  graph('w12 h10', 'MySQL File Openings', NO, { ...half, left: 51.5, bottom: 286.5, scale: [0, 1], y: ['0', '0.200', '0.400', '0.600', '0.800', '1'], series: [flat(0, 'green')] },
    [['green', 'Openings', '0.00|0.00|0.00']]),
  graph('w12 h10', 'MySQL Open Files', NO, { ...half, left: 43, bottom: 234, scale: [444, -33], y: ['0', '10 K', '20 K', '30 K', '40 K'],
    series: [flat(52, 'yellow', .2), flat(444, 'green'), flat(441, 'cyan')] },
    [['yellow', 'Open Files Limit', '32.77 K|32.77 K|32.77 K'], ['cyan', 'InnoDB Open Files', '96.00|96.00|96.00'], ['green', 'Open Files', '0.00|0.00|0.00']]),

  section('Table Openings'),
  graph('w12 h12', 'MySQL Table Open Cache Status', ['info', 'link'], { ...half, left: 40, right: 926.5, bottom: 276.5, scale: [1646, 1059], y: ['0', '200', '400', '600', '800', '1 K'], y2: ['0%', '25%', '50%', '75%', '100%', '125%'],
    series: [{ data: hits, color: C.yellow, fill: .2 }, { data: '1183 1177*68', color: C.red, fill: .2 }, { data: '1643 1646*68', color: C.orange }] },
    [['yellow', 'Hits', '0.10|882.00|740.70'], ['red', 'Table Open Cache Hit Ratio', '98.69%|100.00%|99.98%', '(right-y)'], ['cyan', 'Misses', '0.00|3.70|0.05'], ['green', 'Openings', '0.00|3.70|0.05']]),
  graph('w12 h12', 'MySQL Open Tables', ['info', 'link'], { ...half, left: 35.5, bottom: 336.5, scale: [1804, 1059], y: ['0', '1 K', '2 K', '3 K', '4 K', '5 K'],
    series: [flat(1208, 'yellow', .2), flat(1781, 'green', .2)] },
    [['yellow', 'Table Open Cache', '4.00 K|4.00 K|4.00 K'], ['green', 'Open Tables', '150.00|156.00|155.54']]),

  section('MySQL Table Definition Cache'),
  graph('w24 h9', 'MySQL Table Definition Cache', ['info', 'link'], { ...wide, left: 51.5, right: 1911, bottom: 203, scale: [1178, 782], y: ['0', '500', '1 K', '1.50 K', '2 K', '2.50 K'], y2: ['0', '0.500', '1', '1.50', '2'],
    series: [flat(859, 'yellow', .2), flat(1165, 'green', .2), { data: '821 1177*68', color: C.cyan, fill: .2 }] },
    [['yellow', 'Table Definitions Cache Size', '2.00 K|2.00 K|2.00 K'], ['green', 'Open Table Definitions', '78.00|78.00|78.00'], ['cyan', 'Opened Table Definitions', '0.00|1.80|0.02', '(right-y)']])
];
document.getElementById('dashboard').innerHTML = html.join('');
```
